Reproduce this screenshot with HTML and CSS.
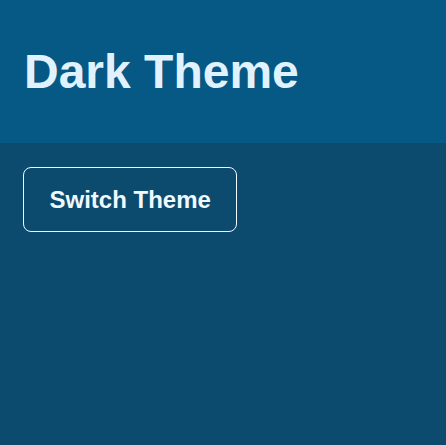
FILE: index.html
```html
<!DOCTYPE html>
<html lang="en">
<head>
<meta charset="utf-8">
<title>Dark Theme</title>
<link rel="stylesheet" href="styles.css">
</head>
<body>
<header class="header">
  <h1 class="title">Dark Theme</h1>
</header>
<main class="content">
  <button class="switch-btn" type="button">Switch Theme</button>
</main>
</body>
</html>
```
FILE: styles.css
```css
html, body {
  margin: 0;
  padding: 0;
  height: 100%;
}
body {
  background: #0c4a6e;
  font-family: "Liberation Sans", Arial, sans-serif;
  color: #e0f2fe;
}
.header {
  background: #075985;
  padding: 12px 24px;
}
.title {
  margin: 32px 0;
  font-size: 48px;
  font-weight: 700;
  line-height: normal;
  color: #e0f2fe;
}
.content {
  padding: 24px 23px;
}
.switch-btn {
  font-family: "Liberation Sans", Arial, sans-serif;
  font-size: 24px;
  font-weight: 700;
  line-height: 31px;
  color: #f0f9ff;
  background: transparent;
  border: 1px solid #f0f9ff;
  border-radius: 8px;
  padding: 16px 25.5px;
  cursor: pointer;
}
```
